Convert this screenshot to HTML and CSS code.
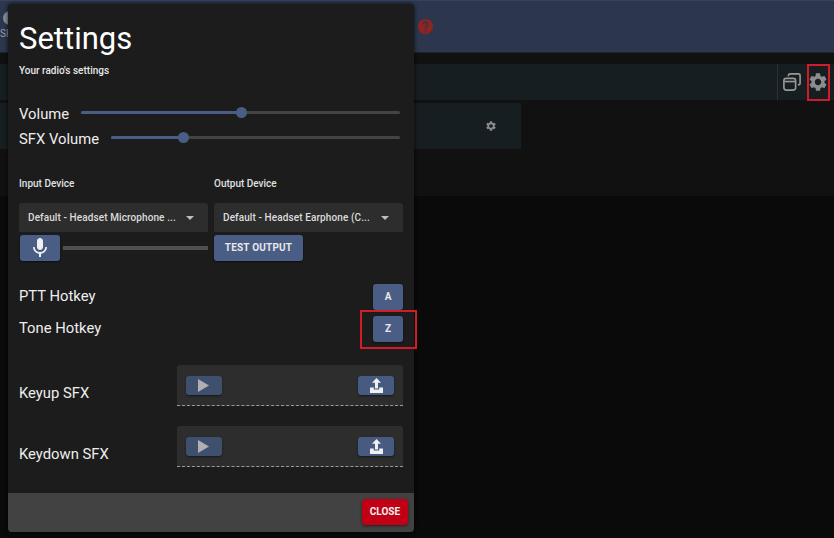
FILE: index.html
```html
<!DOCTYPE html>
<html lang="en">
<head>
  <meta charset="UTF-8">
  <meta name="viewport" content="width=device-width, initial-scale=1.0">
  <title>Settings</title>
  <link rel="stylesheet" href="styles.css">
</head>
<body>
  <!-- dimmed app behind the dialog -->
  <header class="topbar">
    <div class="tab">
      <span class="tab-icon"></span>
      <span class="tab-label">SFX</span>
    </div>
    <svg class="help-icon" viewBox="2 2 20 20"><path d="M12 2C6.48 2 2 6.48 2 12s4.48 10 10 10 10-4.48 10-10S17.52 2 12 2zm1 17h-2v-2h2v2zm2.07-7.75l-.9.92C13.45 12.9 13 13.5 13 15h-2v-.5c0-1.1.45-2.1 1.17-2.83l1.24-1.26c.37-.36.59-.86.59-1.41 0-1.1-.9-2-2-2s-2 .9-2 2H8c0-2.21 1.79-4 4-4s4 1.79 4 4c0 .88-.36 1.68-.93 2.25z"/></svg>
  </header>
  <main class="app-main">
    <div class="toolbar">
      <div class="toolbar-actions">
        <svg class="window-icon" viewBox="0 0 20 20"><rect x="1" y="6" width="13" height="13" rx="2.5"/><path d="M1.5 9.5h12"/><path d="M6 3.5V3a2 2 0 0 1 2-2h9a2 2 0 0 1 2 2v8a2 2 0 0 1-2 2h-.5"/></svg>
        <svg class="gear-icon" viewBox="2 2 20 20"><path d="M19.14 12.94c.04-.3.06-.61.06-.94 0-.32-.02-.64-.07-.94l2.03-1.58a.49.49 0 0 0 .12-.61l-1.92-3.32a.488.488 0 0 0-.59-.22l-2.39.96c-.5-.38-1.03-.7-1.62-.94l-.36-2.54a.484.484 0 0 0-.48-.41h-3.84c-.24 0-.43.17-.47.41l-.36 2.54c-.59.24-1.13.57-1.62.94l-2.39-.96c-.22-.08-.47 0-.59.22L2.74 8.87c-.12.21-.08.47.12.61l2.03 1.58c-.05.3-.09.63-.09.94s.02.64.07.94l-2.03 1.58a.49.49 0 0 0-.12.61l1.92 3.32c.12.22.37.29.59.22l2.39-.96c.5.38 1.03.7 1.62.94l.36 2.54c.05.24.24.41.48.41h3.84c.24 0 .44-.17.47-.41l.36-2.54c.59-.24 1.13-.56 1.62-.94l2.39.96c.22.08.47 0 .59-.22l1.92-3.32c.12-.22.07-.47-.12-.61l-2.01-1.58zM12 15.6c-1.98 0-3.6-1.62-3.6-3.6s1.62-3.6 3.6-3.6 3.6 1.62 3.6 3.6-1.62 3.6-3.6 3.6z"/></svg>
      </div>
    </div>
    <div class="radio-card">
      <svg class="gear-icon small" viewBox="2 2 20 20"><path d="M19.14 12.94c.04-.3.06-.61.06-.94 0-.32-.02-.64-.07-.94l2.03-1.58a.49.49 0 0 0 .12-.61l-1.92-3.32a.488.488 0 0 0-.59-.22l-2.39.96c-.5-.38-1.03-.7-1.62-.94l-.36-2.54a.484.484 0 0 0-.48-.41h-3.84c-.24 0-.43.17-.47.41l-.36 2.54c-.59.24-1.13.57-1.62.94l-2.39-.96c-.22-.08-.47 0-.59.22L2.74 8.87c-.12.21-.08.47.12.61l2.03 1.58c-.05.3-.09.63-.09.94s.02.64.07.94l-2.03 1.58a.49.49 0 0 0-.12.61l1.92 3.32c.12.22.37.29.59.22l2.39-.96c.5.38 1.03.7 1.62.94l.36 2.54c.05.24.24.41.48.41h3.84c.24 0 .44-.17.47-.41l.36-2.54c.59-.24 1.13-.56 1.62-.94l2.39.96c.22.08.47 0 .59-.22l1.92-3.32c.12-.22.07-.47-.12-.61l-2.01-1.58zM12 15.6c-1.98 0-3.6-1.62-3.6-3.6s1.62-3.6 3.6-3.6 3.6 1.62 3.6 3.6-1.62 3.6-3.6 3.6z"/></svg>
    </div>
  </main>

  <!-- settings dialog -->
  <div class="dialog">
    <div class="dialog-body">
      <h1>Settings</h1>
      <p class="subtitle">Your radio's settings</p>

      <div class="slider-row first">
        <span class="big-label">Volume</span>
        <div class="slider"><div class="slider-fill fill-volume"><span class="thumb"></span></div></div>
      </div>
      <div class="slider-row">
        <span class="big-label">SFX Volume</span>
        <div class="slider"><div class="slider-fill fill-sfx"><span class="thumb"></span></div></div>
      </div>

      <div class="devices">
        <span class="device-label">Input Device</span>
        <span class="device-label">Output Device</span>
        <div class="select"><span class="select-text">Default - Headset Microphone ...</span><span class="caret"></span></div>
        <div class="select"><span class="select-text">Default - Headset Earphone (C...</span><span class="caret"></span></div>
        <div class="mic-row">
          <button class="btn mic-btn">
            <svg viewBox="0 0 24 24"><path d="M12 14c1.66 0 2.99-1.34 2.99-3L15 5c0-1.66-1.34-3-3-3S9 3.34 9 5v6c0 1.66 1.34 3 3 3zm5.3-3c0 3-2.54 5.1-5.3 5.1S6.7 14 6.7 11H5c0 3.41 2.72 6.23 6 6.72V21h2v-3.28c3.28-.48 6-3.3 6-6.72h-1.7z"/></svg>
          </button>
          <div class="meter"></div>
        </div>
        <div class="test-row"><button class="btn test-btn">TEST OUTPUT</button></div>
      </div>

      <div class="hotkey-row ptt">
        <span class="big-label">PTT Hotkey</span>
        <button class="btn key-btn">A</button>
      </div>
      <div class="hotkey-row tone">
        <span class="big-label">Tone Hotkey</span>
        <button class="btn key-btn">Z</button>
      </div>

      <div class="sfx-row keyup">
        <span class="big-label">Keyup SFX</span>
        <div class="file-field">
          <button class="btn file-btn play-btn"><svg viewBox="0 0 11 13"><path d="M0 0 11 6.5 0 13z"/></svg></button>
          <button class="btn file-btn"><svg viewBox="0 0 13 15"><path d="M6.5 0 11 4.7H8V10.5H5V4.7H2z"/><path d="M0 9.6H3.8V11.6H9.2V9.6H13V15H0z"/></svg></button>
        </div>
      </div>
      <div class="sfx-row keydown">
        <span class="big-label">Keydown SFX</span>
        <div class="file-field">
          <button class="btn file-btn play-btn"><svg viewBox="0 0 11 13"><path d="M0 0 11 6.5 0 13z"/></svg></button>
          <button class="btn file-btn"><svg viewBox="0 0 13 15"><path d="M6.5 0 11 4.7H8V10.5H5V4.7H2z"/><path d="M0 9.6H3.8V11.6H9.2V9.6H13V15H0z"/></svg></button>
        </div>
      </div>
    </div>
    <div class="dialog-footer">
      <button class="close-btn">CLOSE</button>
    </div>
  </div>

  <!-- red annotation boxes from the screenshot -->
  <div class="callout callout-gear"></div>
  <div class="callout callout-key"></div>
</body>
</html>
```

FILE: styles.css
```css
* {
  box-sizing: border-box;
}

body {
  margin: 0;
  height: 538px;
  overflow: hidden;
  background-color: #0a0a0a;
  color: #fff;
  font-family: Roboto, "Liberation Sans", sans-serif;
}

/* Dimmed app behind the dialog */
.topbar {
  height: 53px;
  display: flex;
  align-items: center;
  background-color: #2c374d;
  border-top: 1px solid #36435c;
  border-bottom: 1px solid #1f2430;
}

.tab {
  width: 418px;
  height: 100%;
  color: #9aa0aa;
  font-size: 10px;
  display: flex;
  flex-direction: column;
  justify-content: flex-start;
  padding-top: 10px;
}

.tab-icon {
  display: block;
  width: 14px;
  height: 14px;
  margin: 0 0 3px 3px;
  border-radius: 50%;
  background-color: #8a8f99;
}

.help-icon {
  width: 15px;
  height: 15px;
  fill: #8f2420;
}

.app-main {
  height: 143px;
  padding-top: 11px;
  background-color: #111;
}

.toolbar {
  height: 36px;
  display: flex;
  justify-content: flex-end;
  background-color: #171e21;
}

.toolbar-actions {
  width: 57px;
  display: flex;
  align-items: center;
  gap: 8px;
  padding-left: 5px;
  border-left: 1px solid #2b3134;
}

.window-icon {
  width: 18px;
  height: 18px;
  fill: none;
  stroke: #999;
  stroke-width: 1.8;
}

.gear-icon {
  width: 18px;
  height: 18px;
  fill: #8c8c8c;
}

.gear-icon.small {
  width: 10px;
  height: 10px;
}

.radio-card {
  width: 521px;
  height: 46px;
  margin-top: 3px;
  padding-right: 25px;
  display: flex;
  align-items: center;
  justify-content: flex-end;
  background-color: #171e21;
}

/* Dialog */
.dialog {
  position: absolute;
  left: 8px;
  top: 4px;
  width: 406px;
  height: 528px;
  display: flex;
  flex-direction: column;
  background-color: #1c1c1c;
  border-radius: 4px;
  overflow: hidden;
  box-shadow: 0 0 4px rgba(0, 0, 0, 0.8);
}

.dialog-body {
  flex: 1;
  padding: 0 11px;
}

h1 {
  margin: 15px 0 0 0;
  font-size: 31px;
  font-weight: 400;
  line-height: 40px;
}

.subtitle {
  margin: 4px 0 0 0;
  font-size: 10px;
  font-weight: 500;
  line-height: 16px;
  color: #e8e8e8;
}

.big-label {
  font-size: 14.8px;
  line-height: 20px;
  color: #eee;
  white-space: nowrap;
}

.slider-row {
  height: 25px;
  display: flex;
  align-items: center;
  gap: 12px;
}

.slider-row.first {
  margin-top: 22px;
}

.slider {
  flex: 1;
  height: 3px;
  margin: -3px 3px 0 0;
  border-radius: 2px;
  background-color: #444;
}

.slider-fill {
  position: relative;
  height: 100%;
  border-radius: 2px;
  background-color: #4a5d85;
}

.fill-volume {
  width: 50%;
}

.fill-sfx {
  width: 25%;
}

.thumb {
  position: absolute;
  right: -6px;
  top: -4px;
  width: 11px;
  height: 11px;
  border-radius: 50%;
  background-color: #4a5d85;
}

.devices {
  width: 384px;
  margin-top: 25px;
  display: grid;
  grid-template-columns: 189px 189px;
  column-gap: 6px;
}

.device-label {
  font-size: 10px;
  font-weight: 500;
  line-height: 16px;
  color: #e0e0e0;
}

.select {
  height: 29px;
  margin-top: 11px;
  padding: 0 14px 0 9px;
  display: flex;
  align-items: center;
  justify-content: space-between;
  border-radius: 3px 3px 0 0;
  background-color: #2d2d2d;
}

.select-text {
  white-space: nowrap;
  font-size: 10px;
  font-weight: 500;
  letter-spacing: 0.1px;
  color: #dcdcdc;
}

.caret {
  flex: none;
  width: 0;
  height: 0;
  border-left: 4px solid transparent;
  border-right: 4px solid transparent;
  border-top: 4px solid #bdbdbd;
}

.btn {
  padding: 0;
  border: none;
  border-radius: 3px;
  color: #e8e8e8;
  font-family: inherit;
  font-weight: 700;
  background-color: #4a5d85;
  display: flex;
  align-items: center;
  justify-content: center;
  box-shadow: 0 1px 2px rgba(0, 0, 0, 0.5);
}

.mic-row {
  margin-top: 3px;
  display: flex;
  align-items: center;
  gap: 3px;
}

.mic-btn {
  width: 40px;
  height: 26px;
  margin-left: 1px;
}

.mic-btn svg {
  width: 24px;
  height: 24px;
  fill: #f0f0f0;
}

.meter {
  flex: 1;
  height: 4px;
  background-color: #4f4f4f;
}

.test-row {
  margin-top: 3px;
}

.test-btn {
  width: 89px;
  height: 26px;
  padding-bottom: 2px;
  font-size: 10px;
  font-weight: 700;
  letter-spacing: 0.2px;
}

.hotkey-row {
  width: 384px;
  display: flex;
  align-items: center;
  justify-content: space-between;
}

.hotkey-row.ptt {
  margin-top: 23px;
}

.hotkey-row.tone {
  margin-top: 6px;
}

.hotkey-row .big-label {
  margin-top: -2px;
}

.key-btn {
  width: 30px;
  height: 26px;
  padding-bottom: 1px;
  font-size: 10px;
}

.sfx-row {
  width: 384px;
  display: flex;
  align-items: center;
  justify-content: space-between;
}

.sfx-row.keyup {
  margin-top: 23px;
}

.sfx-row.keydown {
  margin-top: 20px;
}

.sfx-row .big-label {
  margin-top: 14px;
}

.file-field {
  width: 226px;
  height: 41px;
  padding: 11px 9px 0 9px;
  display: flex;
  align-items: flex-start;
  justify-content: space-between;
  border-radius: 3px 3px 0 0;
  border-bottom: 1px dashed #9a9a9a;
  background-color: #2d2d2d;
}

.file-btn {
  width: 36px;
  height: 19px;
  background-color: #475a80;
}

.file-btn svg {
  width: 13px;
  height: 15px;
  fill: #f0f0f0;
}

.play-btn {
  background-color: #3f4f6e;
}

.play-btn svg {
  width: 11px;
  height: 13px;
  margin-right: 1px;
  fill: #b0b0b0;
}

.dialog-footer {
  height: 39px;
  padding: 6px 6px 0 0;
  display: flex;
  justify-content: flex-end;
  align-items: flex-start;
  background-color: #424242;
}

.close-btn {
  width: 46px;
  height: 26px;
  padding: 0 0 1px 0;
  border: none;
  border-radius: 3px;
  font-family: inherit;
  font-size: 10px;
  font-weight: 700;
  color: #eee;
  background-color: #c10015;
  box-shadow: 0 1px 3px rgba(0, 0, 0, 0.5);
}

/* Red annotation boxes */
.callout {
  position: absolute;
  border: 2px solid #d01c28;
}

.callout-gear {
  left: 807px;
  top: 64px;
  width: 23px;
  height: 37px;
}

.callout-key {
  left: 360px;
  top: 310px;
  width: 57px;
  height: 39px;
}
```
